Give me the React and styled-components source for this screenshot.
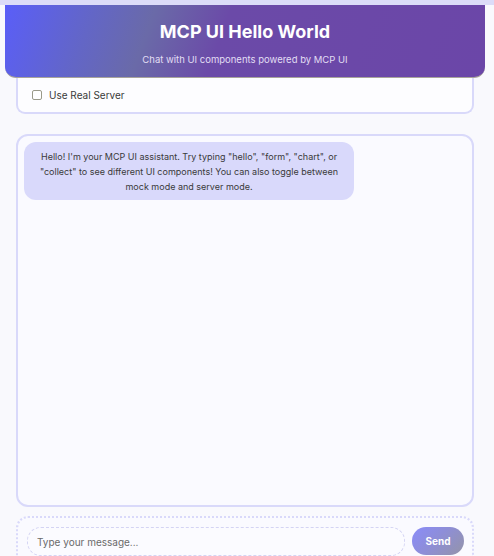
import React, { useState } from 'react'
import styled, { createGlobalStyle } from 'styled-components'

const GlobalStyle = createGlobalStyle`
  html, body {
    margin: 0;
    padding: 0;
    background: #f9f9fd;
    font-family: Inter, "Liberation Sans", sans-serif;
  }
  * { box-sizing: border-box; }
`

const Page = styled.div`
  border-top: 5px solid #dcdcf8;
  display: flex;
  flex-direction: column;
  height: 556px;
  overflow: hidden;
`

const Header = styled.header`
  margin: 0 9px 0 5px;
  height: 73px;
  border-radius: 0 0 11px 11px;
  background: linear-gradient(110deg, #5a5ef8 0%, #6366c6 18%, #6a6aa8 30%, #6b4aa8 45%, #6b46a8 100%);
  border-bottom: 1px solid #a8a49a;
  color: #fff;
  text-align: center;
  padding-top: 16px;
`

const Title = styled.h1`
  margin: 0;
  font-size: 18px;
  font-weight: 700;
  line-height: 22px;
`

const Subtitle = styled.p`
  margin: 11px 0 0;
  font-size: 9.5px;
  line-height: 12px;
  color: #e2def4;
`

const Card = styled.div`
  margin: 0 20px 0 16px;
  background: ${p => p.$bg || '#fdfdff'};
  border: 2px solid #d9d9fa;
  border-radius: ${p => p.$radius || '12px'};
`

const ServerCard = styled(Card)`
  height: 36px;
  border-top: none;
  border-radius: 0 0 9px 9px;
  display: flex;
  align-items: center;
  padding-left: 14px;
  gap: 7px;
  font-size: 10px;
  color: #3a3a3a;
`

const Check = styled.span`
  width: 10px;
  height: 10px;
  border: 1px solid #9a9a8a;
  border-radius: 2px;
  background: #fff;
`

const ChatBox = styled(Card)`
  margin-top: 20px;
  height: 375px;
  padding: 6px 6px;
  background: #fafaff;
`

const Bubble = styled.div`
  width: 330px;
  background: #d9d9fb;
  border-radius: 12px;
  padding: 7px 8px 6px;
  font-size: 9px;
  line-height: 15px;
  color: #3a3a3a;
  text-align: center;
`

const InputCard = styled(Card)`
  margin-top: 9px;
  flex: 1;
  border-style: dotted;
  border-bottom: none;
  border-radius: 12px 12px 0 0;
  background: #fafaff;
  display: flex;
  gap: 7px;
  padding: 9px 8px 0 9px;
`

const Input = styled.input`
  flex: 1;
  height: 29px;
  border: 1px dashed #d4d4f4;
  border-radius: 14px;
  background: #fbfbff;
  padding: 0 9px;
  font-family: inherit;
  font-size: 10px;
  color: #333;
  outline: none;
  &::placeholder { color: #6a6a6a; }
`

const SendButton = styled.button`
  width: 52px;
  height: 28px;
  border: none;
  border-radius: 14px;
  background: linear-gradient(135deg, #8a8cfa 0%, #8e8ed8 45%, #9494a8 100%);
  color: #fff;
  font-family: inherit;
  font-size: 10px;
  font-weight: 700;
`

export default function App() {
  const [text, setText] = useState('')
  return (
    <>
      <GlobalStyle />
      <Page>
        <Header>
          <Title>MCP UI Hello World</Title>
          <Subtitle>Chat with UI components powered by MCP UI</Subtitle>
        </Header>
        <ServerCard>
          <Check />
          <span>Use Real Server</span>
        </ServerCard>
        <ChatBox>
          <Bubble>
            Hello! I'm your MCP UI assistant. Try typing "hello", "form", "chart", or "collect" to see different UI components! You can also toggle between mock mode and server mode.
          </Bubble>
        </ChatBox>
        <InputCard>
          <Input placeholder="Type your message..." value={text} onChange={e => setText(e.target.value)} />
          <SendButton>Send</SendButton>
        </InputCard>
      </Page>
    </>
  )
}
